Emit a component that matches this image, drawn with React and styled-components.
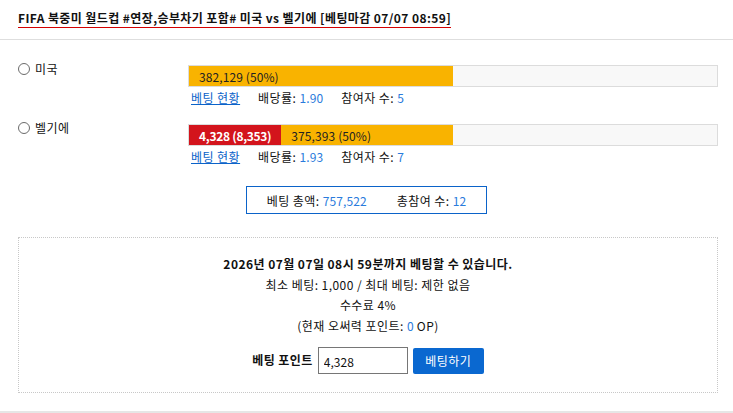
import React from "react";
import styled, { createGlobalStyle } from "styled-components";

const Global = createGlobalStyle`
  html, body { margin: 0; padding: 0; background: #fff; }
  body {
    font-family: "Noto Sans CJK KR", "Noto Sans", sans-serif;
    font-size: 12px;
    letter-spacing: 0.45px;
    color: #111;
  }
`;

const Page = styled.div`
  width: 733px;
  min-height: 411px;
  border-bottom: 2px solid #e6e6e6;
  box-sizing: border-box;
`;

const Header = styled.div`
  height: 40px;
  padding: 9px 18px 0;
  box-sizing: border-box;
  border-bottom: 1px solid #dedede;
`;

const Title = styled.h1`
  display: inline-block;
  margin: 0;
  font-size: 12px;
  font-weight: 700;
  line-height: 18px;
  letter-spacing: 0.4px;
  border-bottom: 1px solid #d40000;
`;

const Body = styled.div`
  padding: 20px 15px 18px 18px;
`;

const OptionRow = styled.div`
  display: grid;
  grid-template-columns: 170px 530px;
  align-items: start;
  margin-bottom: ${(p) => p.$gap || 0}px;
`;

const OptionLabel = styled.label`
  display: flex;
  align-items: center;
  gap: 5px;
  line-height: 18px;
  font-size: 12px;
`;

const Radio = styled.input.attrs({ type: "radio" })`
  appearance: none;
  margin: 0;
  width: 12px;
  height: 12px;
  border: 1px solid #6b6b6b;
  border-radius: 50%;
  background: #fff;
`;

const BarCell = styled.div`
  padding-top: 5px;
`;

const Track = styled.div`
  height: 20px;
  border: 1px solid #dcdcdc;
  background: #f8f8f8;
  display: flex;
`;

const Fill = styled.div`
  display: flex;
  height: 100%;
`;

const Segment = styled.div`
  display: flex;
  align-items: center;
  padding: 0 10px;
  white-space: nowrap;
  font-size: 12px;
  letter-spacing: ${(p) => (p.$red ? "-0.3px" : "0.1px")};
  background: ${(p) => (p.$red ? "#d3141c" : "#f9b300")};
  color: ${(p) => (p.$red ? "#fff" : "#222")};
  font-weight: ${(p) => (p.$red ? 700 : 400)};
  flex: ${(p) => (p.$red ? "none" : "1")};
`;

const Meta = styled.div`
  display: flex;
  gap: 18px;
  margin-top: 3px;
  padding-left: 3px;
  line-height: 16px;
`;

const Link = styled.a`
  color: #0b63c9;
  text-decoration: underline;
  cursor: pointer;
`;

const Num = styled.span`
  color: #2a7bdc;
  letter-spacing: 0.1px;
`;

const TotalWrap = styled.div`
  display: flex;
  justify-content: center;
  margin: 21px 0 23px;
  padding-right: 3px;
`;

const TotalBox = styled.div`
  display: flex;
  align-items: center;
  gap: 30px;
  height: 26px;
  padding: 0 20px;
  border: 1px solid #0b63c9;
`;

const BetPanel = styled.div`
  border: 1px dotted #c8c8c8;
  padding: 16px 0 18px;
  display: flex;
  flex-direction: column;
  align-items: center;
  line-height: 20.5px;
`;

const Notice = styled.div`
  font-weight: 700;
`;

const BetForm = styled.div`
  display: flex;
  align-items: center;
  gap: 5px;
  margin-top: 11px;
`;

const FormLabel = styled.span`
  font-weight: 700;
`;

const PointInput = styled.input`
  box-sizing: border-box;
  width: 90px;
  height: 27px;
  border: 1px solid #767676;
  padding: 2px 5px 0;
  font-family: inherit;
  font-size: 12px;
  color: #111;
  outline: none;
`;

const BetButton = styled.button`
  box-sizing: border-box;
  width: 71px;
  height: 26px;
  border: none;
  border-radius: 2px;
  background: #0a68d0;
  color: #fff;
  font-family: inherit;
  font-size: 12px;
  letter-spacing: 0.45px;
  cursor: pointer;
`;

const options = [
  {
    name: "미국",
    red: null,
    amount: "382,129 (50%)",
    rate: "1.90",
    users: 5,
    gap: 13,
  },
  {
    name: "벨기에",
    red: "4,328 (8,353)",
    amount: "375,393 (50%)",
    rate: "1.93",
    users: 7,
    gap: 0,
  },
];

export default function App() {
  return (
    <Page>
      <Global />
      <Header>
        <Title>
          FIFA 북중미 월드컵 #연장,승부차기 포함# 미국 vs 벨기에 [베팅마감 07/07 08:59]
        </Title>
      </Header>
      <Body>
        {options.map((o) => (
          <OptionRow key={o.name} $gap={o.gap}>
            <OptionLabel>
              <Radio name="pick" />
              {o.name}
            </OptionLabel>
            <BarCell>
              <Track>
                <Fill style={{ width: "50%" }}>
                  {o.red && <Segment $red>{o.red}</Segment>}
                  <Segment>{o.amount}</Segment>
                </Fill>
              </Track>
              <Meta>
                <Link>베팅 현황</Link>
                <span>
                  배당률: <Num>{o.rate}</Num>
                </span>
                <span>
                  참여자 수: <Num>{o.users}</Num>
                </span>
              </Meta>
            </BarCell>
          </OptionRow>
        ))}
        <TotalWrap>
          <TotalBox>
            <span>
              베팅 총액: <Num>757,522</Num>
            </span>
            <span>
              총참여 수: <Num>12</Num>
            </span>
          </TotalBox>
        </TotalWrap>
        <BetPanel>
          <Notice>2026년 07월 07일 08시 59분까지 베팅할 수 있습니다.</Notice>
          <div>최소 베팅: 1,000 / 최대 베팅: 제한 없음</div>
          <div>수수료 4%</div>
          <div>
            (현재 오써력 포인트: <Num>0</Num> OP)
          </div>
          <BetForm>
            <FormLabel>베팅 포인트</FormLabel>
            <PointInput defaultValue="4,328" />
            <BetButton>베팅하기</BetButton>
          </BetForm>
        </BetPanel>
      </Body>
    </Page>
  );
}
